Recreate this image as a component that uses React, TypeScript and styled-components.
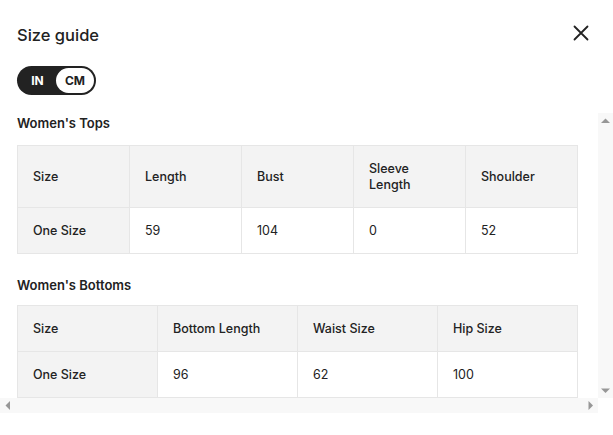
import React, { useState } from "react";
import styled, { createGlobalStyle } from "styled-components";

const GlobalStyle = createGlobalStyle`
  html, body {
    margin: 0;
    padding: 0;
    background: #fff;
  }
  body {
    font-family: Inter, "Noto Sans", Arial, sans-serif;
    color: #222;
  }
`;

const Modal = styled.div`
  width: 613px;
  height: 435px;
  background: #fff;
  display: flex;
  flex-direction: column;
  overflow: hidden;
`;

const Header = styled.div`
  display: flex;
  align-items: flex-start;
  justify-content: space-between;
  padding: 23px 23px 0 17px;
`;

const Title = styled.h2`
  margin: 0;
  font-size: 16.5px;
  line-height: 24px;
  font-weight: 500;
  color: #222;
`;

const CloseButton = styled.button`
  border: none;
  background: none;
  padding: 0;
  margin-top: 1px;
  width: 18px;
  height: 18px;
  display: flex;
  align-items: center;
  justify-content: center;
  cursor: pointer;
  color: #222;
`;

const Toggle = styled.div`
  display: inline-flex;
  align-items: center;
  align-self: flex-start;
  margin: 19px 0 18px 17px;
  height: 29px;
  padding: 2px;
  box-sizing: border-box;
  border-radius: 15px;
  background: #222;
`;

const ToggleOption = styled.button<{ active: boolean }>`
  border: none;
  height: 25px;
  padding: 0;
  width: ${(p) => (p.active ? "38px" : "37px")};
  border-radius: 13px;
  font-family: inherit;
  font-size: 12px;
  font-weight: 700;
  cursor: pointer;
  background: ${(p) => (p.active ? "#fff" : "transparent")};
  color: ${(p) => (p.active ? "#222" : "#fff")};
`;

// scroll frame: content plus classic scrollbars (track, arrow buttons, no thumb)
const ScrollFrame = styled.div`
  display: grid;
  grid-template-columns: 1fr 15px;
  grid-template-rows: 285px 15px;
`;

const ScrollContent = styled.div`
  overflow: hidden;
  padding: 0 20px 0 17px;
`;

const ScrollBar = styled.div<{ vertical?: boolean }>`
  display: flex;
  flex-direction: ${(p) => (p.vertical ? "column" : "row")};
  justify-content: space-between;
  background: #f8f8f8;
`;

const ScrollCorner = styled.div`
  background: #fff;
`;

const ArrowButton = styled.div`
  width: 15px;
  height: 15px;
  display: flex;
  align-items: center;
  justify-content: center;
  color: #979797;
`;

const Section = styled.section<{ first?: boolean }>`
  margin-top: ${(p) => (p.first ? "2px" : "23px")};
`;

const SectionTitle = styled.h3<{ gap: number }>`
  margin: 0 0 ${(p) => p.gap}px;
  font-size: 13px;
  line-height: 16px;
  font-weight: 600;
  color: #222;
`;

const Table = styled.table`
  width: 100%;
  border-collapse: collapse;
  table-layout: fixed;
  font-size: 12.5px;
  line-height: 16px;
`;

const Cell = styled.td<{ shaded?: boolean; strong?: boolean }>`
  border: 1px solid #e6e6e6;
  padding: 14.5px 15px;
  text-align: left;
  vertical-align: middle;
  color: #222;
  background: ${(p) => (p.shaded ? "#f3f3f3" : "#fff")};
  font-weight: ${(p) => (p.strong ? 500 : 400)};
`;

type SizeTable = {
  title: string;
  gap: number;
  columns: string[];
  rows: string[][];
};

const tables: SizeTable[] = [
  {
    title: "Women's Tops",
    gap: 14,
    columns: ["Size", "Length", "Bust", "Sleeve Length", "Shoulder"],
    rows: [["One Size", "59", "104", "0", "52"]],
  },
  {
    title: "Women's Bottoms",
    gap: 12,
    columns: ["Size", "Bottom Length", "Waist Size", "Hip Size"],
    rows: [["One Size", "96", "62", "100"]],
  },
];

const CloseIcon = () => (
  <svg width="16" height="16" viewBox="0 0 16 16" fill="none">
    <path
      d="M1.5 1.5L14.5 14.5M14.5 1.5L1.5 14.5"
      stroke="currentColor"
      strokeWidth="1.8"
      strokeLinecap="round"
    />
  </svg>
);

const arrowPaths = {
  up: "M0 5L4.5 0.5L9 5Z",
  down: "M0 0.5L9 0.5L4.5 5Z",
  left: "M0.5 4.5L5 0L5 9Z",
  right: "M0.5 0L5 4.5L0.5 9Z",
};

const Arrow = ({ dir }: { dir: keyof typeof arrowPaths }) => {
  const horizontal = dir === "left" || dir === "right";
  return (
    <ArrowButton>
      <svg
        width={horizontal ? 6 : 9}
        height={horizontal ? 9 : 6}
        viewBox={horizontal ? "0 0 6 9" : "0 0 9 6"}
      >
        <path d={arrowPaths[dir]} fill="currentColor" />
      </svg>
    </ArrowButton>
  );
};

export default function App() {
  const [unit, setUnit] = useState<"IN" | "CM">("CM");

  return (
    <>
      <GlobalStyle />
      <Modal>
        <Header>
          <Title>Size guide</Title>
          <CloseButton aria-label="Close">
            <CloseIcon />
          </CloseButton>
        </Header>
        <Toggle>
          {(["IN", "CM"] as const).map((u) => (
            <ToggleOption key={u} active={unit === u} onClick={() => setUnit(u)}>
              {u}
            </ToggleOption>
          ))}
        </Toggle>
        <ScrollFrame>
          <ScrollContent>
            {tables.map((t, i) => (
              <Section key={t.title} first={i === 0}>
                <SectionTitle gap={t.gap}>{t.title}</SectionTitle>
                <Table>
                  <thead>
                    <tr>
                      {t.columns.map((c) => (
                        <Cell as="th" key={c} shaded strong>
                          {c}
                        </Cell>
                      ))}
                    </tr>
                  </thead>
                  <tbody>
                    {t.rows.map((r, ri) => (
                      <tr key={ri}>
                        {r.map((v, ci) => (
                          <Cell key={ci} shaded={ci === 0} strong={ci === 0}>
                            {v}
                          </Cell>
                        ))}
                      </tr>
                    ))}
                  </tbody>
                </Table>
              </Section>
            ))}
          </ScrollContent>
          <ScrollBar vertical>
            <Arrow dir="up" />
            <Arrow dir="down" />
          </ScrollBar>
          <ScrollBar>
            <Arrow dir="left" />
            <Arrow dir="right" />
          </ScrollBar>
          <ScrollCorner />
        </ScrollFrame>
      </Modal>
    </>
  );
}
